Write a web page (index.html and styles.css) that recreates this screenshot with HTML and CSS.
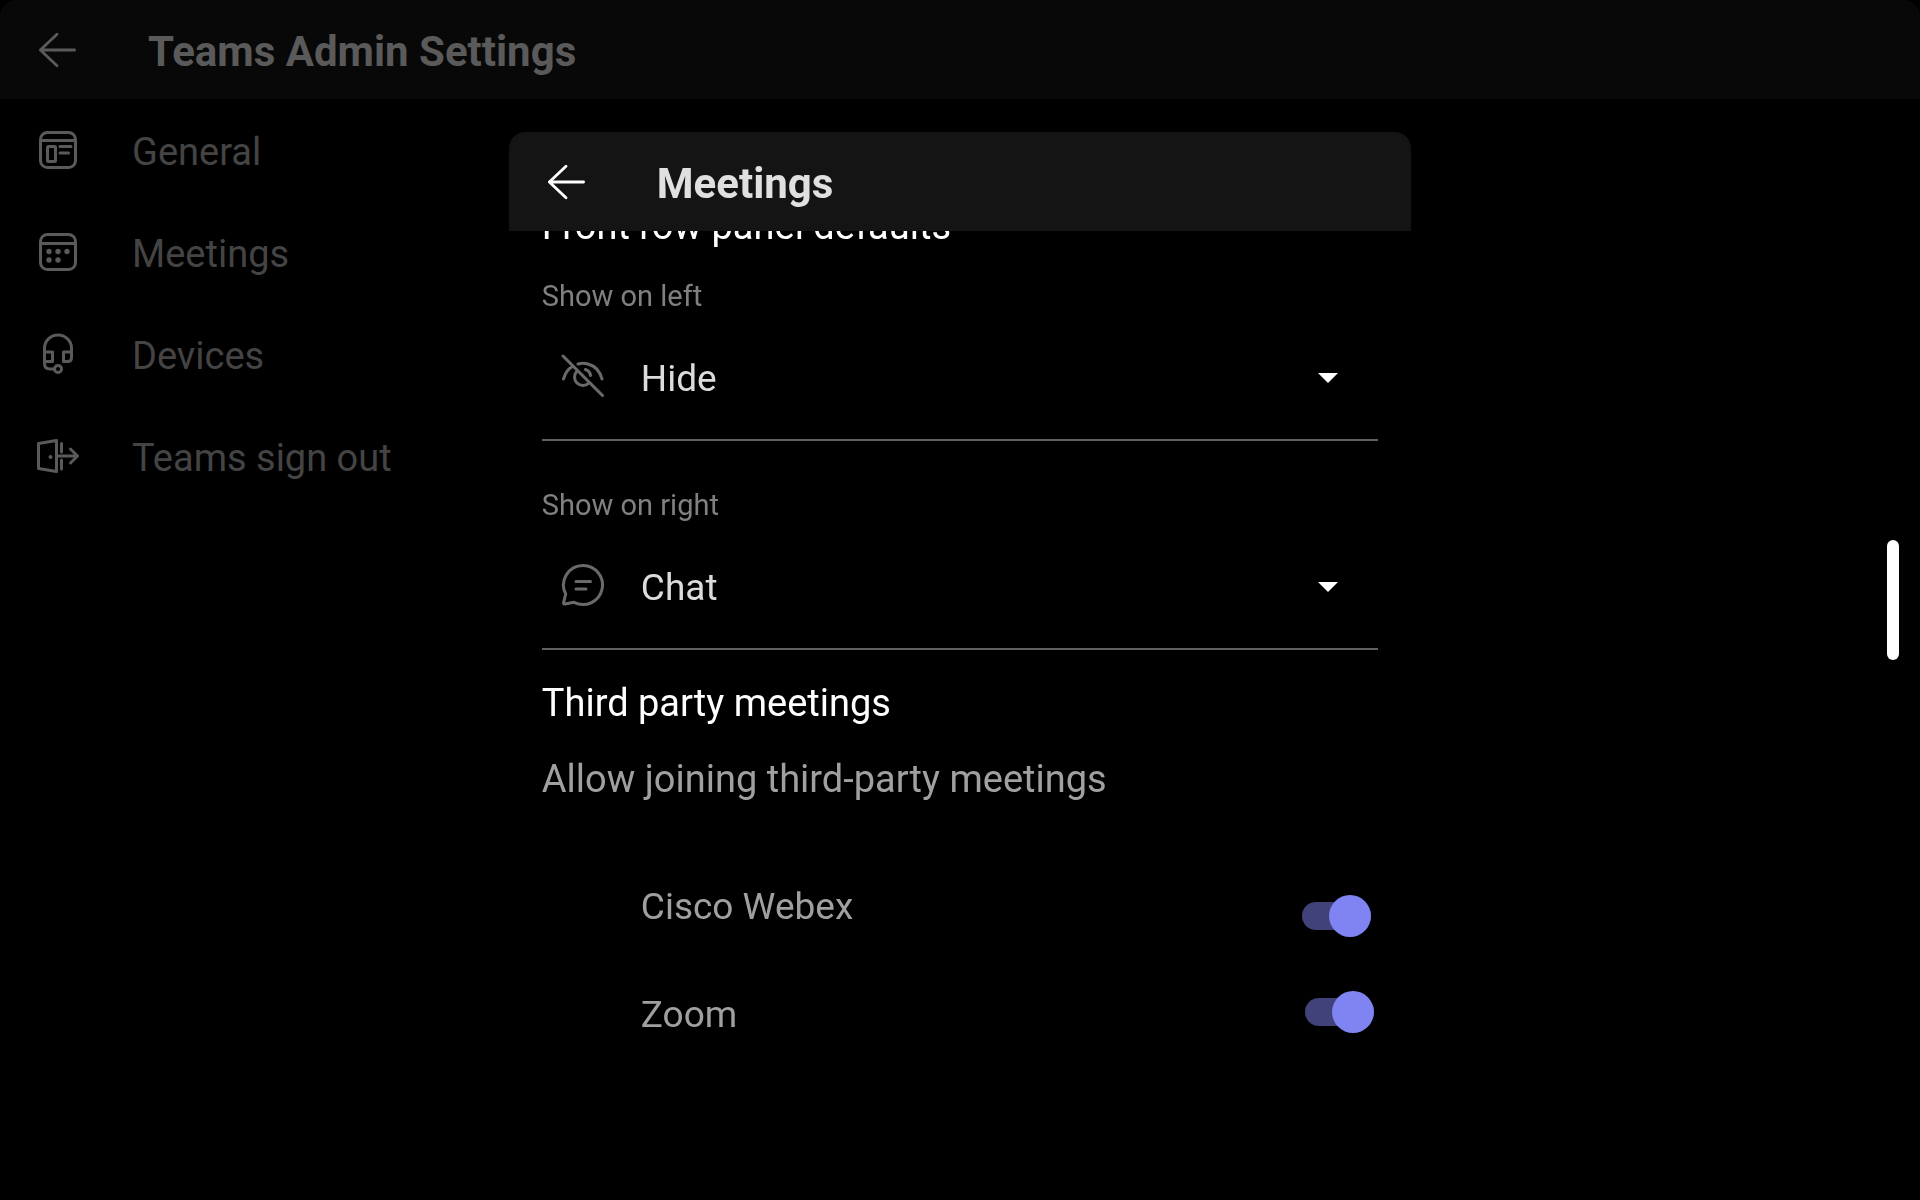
FILE: index.html
```html
<!DOCTYPE html>
<html lang="en">
<head>
<meta charset="utf-8">
<title>Teams Admin Settings</title>
<link rel="stylesheet" href="styles.css">
</head>
<body>
<div class="app">
  <header class="bar app-bar">
    <button class="icon-button" type="button" aria-label="Back">
      <svg class="arrow" viewBox="0 0 40 40"><path d="M20 3.500L2.500 20L20 36.500M2.500 20H38.500"/></svg>
    </button>
    <h1 class="bar-title">Teams Admin Settings</h1>
  </header>
  <nav class="menu">
    <a class="menu-item" href="#general">
      <svg class="menu-icon" viewBox="0 0 44 44"><rect x="4.500" y="4.500" width="35" height="35" rx="7"/><path d="M4.500 12.500H39.500M24 18.500H35M24 25H32.500"/><rect x="11.500" y="18.500" width="8" height="15" rx="1"/></svg>
      <span class="menu-text">General</span>
    </a>
    <a class="menu-item" href="#meetings">
      <svg class="menu-icon" viewBox="0 0 44 44"><rect x="4.500" y="4.500" width="35" height="35" rx="7"/><path d="M4.500 13.500H39.500"/><g class="dots"><circle cx="13" cy="21.500" r="2.700"/><circle cx="22" cy="21.500" r="2.700"/><circle cx="31" cy="21.500" r="2.700"/><circle cx="13" cy="30" r="2.700"/><circle cx="22" cy="30" r="2.700"/></g></svg>
      <span class="menu-text">Meetings</span>
    </a>
    <a class="menu-item" href="#devices">
      <svg class="menu-icon" viewBox="0 0 44 44"><path d="M8.500 30V16A13.500 13 0 0 1 35.500 16V25.500Q35.500 29.500 31.500 29.500H27.500V20H35.500M8.500 20H16.500V29.500H8.500V31.500Q8.500 37 14 37H18"/><circle cx="22" cy="37" r="3.500"/></svg>
      <span class="menu-text">Devices</span>
    </a>
    <a class="menu-item" href="#sign-out">
      <svg class="menu-icon" viewBox="0 0 44 44"><path d="M2.500 9.500L20.500 6.500V37.500L2.500 34.500ZM21 22H41M34.500 15L41.500 22L34.500 29M25.500 9.500V18M25.500 26V35"/><circle class="dots" cx="14.500" cy="23" r="2"/></svg>
      <span class="menu-text">Teams sign out</span>
    </a>
  </nav>
</div>

<div class="overlay">
  <section class="dialog" role="dialog" aria-labelledby="dialog-title">
    <header class="bar dialog-bar">
      <button class="icon-button" type="button" aria-label="Back">
        <svg class="arrow" viewBox="0 0 40 40"><path d="M20 3.500L2.500 20L20 36.500M2.500 20H38.500"/></svg>
      </button>
      <h2 class="bar-title" id="dialog-title">Meetings</h2>
    </header>
    <div class="viewport">
      <div class="scrolled">
        <h3 class="section-title">Front row panel defaults</h3>
        <div class="field">
          <label class="field-label" for="left">Show on left</label>
          <div class="picker">
            <svg class="picker-icon" viewBox="0 0 48 48"><path d="M4 4L43.500 43.500M4.500 27Q7 18 13.500 14.500M19 12Q24 10.500 29 12Q40 15 43 27M18 19A8 8 0 1 0 30 31M26.500 17.500Q31 19 31.500 23.500"/></svg>
            <select class="picker-select" id="left"><option>Hide</option><option>Chat</option></select>
            <svg class="caret" viewBox="0 0 20 12"><path d="M0 1H20L10 11Z"/></svg>
          </div>
        </div>
        <div class="field">
          <label class="field-label" for="right">Show on right</label>
          <div class="picker">
            <svg class="picker-icon" viewBox="0 0 48 48"><path d="M24 4.500A19.500 19.500 0 1 1 15 41.300L6 43Q4.200 43.300 4.600 41.500L6.700 33A19.500 19.500 0 0 1 24 4.500ZM17 20.500H31.500M17 28H27"/></svg>
            <select class="picker-select" id="right"><option>Chat</option><option>Hide</option></select>
            <svg class="caret" viewBox="0 0 20 12"><path d="M0 1H20L10 11Z"/></svg>
          </div>
        </div>
        <h3 class="section-title third-party">Third party meetings</h3>
        <p class="hint">Allow joining third-party meetings</p>
        <div class="toggles">
          <div class="toggle-row toggle-low">
            <label for="webex">Cisco Webex</label>
            <input class="switch" type="checkbox" role="switch" id="webex" checked>
          </div>
          <div class="toggle-row">
            <label for="zoom">Zoom</label>
            <input class="switch" type="checkbox" role="switch" id="zoom" checked>
          </div>
        </div>
      </div>
    </div>
  </section>
</div>
<div class="scroll-thumb"></div>
</body>
</html>
```
FILE: styles.css
```css
* {
  box-sizing: border-box;
}

body {
  margin: 0;
  min-height: 100vh;
  background: #000;
  color: #a0a0a0;
  font: 38px/48px Roboto, sans-serif;
}

h1, h2, h3, p {
  margin: 0;
}

svg {
  flex: none;
  fill: none;
  stroke: currentColor;
  stroke-linecap: round;
  stroke-linejoin: round;
}

.bar {
  display: flex;
  align-items: center;
  gap: 72px;
  height: 99px;
  padding: 0 38px;
}

.app-bar {
  background: #080808;
  border-radius: 16px 16px 0 0;
  color: #5a5a5a;
}

.dialog-bar {
  background: #141414;
  border-radius: 16px 16px 0 0;
  color: #e0e0e0;
}

.bar-title {
  padding-top: 4px;
  font-size: 42px;
  line-height: 48px;
  font-weight: 700;
}

.icon-button {
  display: flex;
  padding: 0;
  border: 0;
  background: none;
  color: inherit;
}

.dialog-bar .icon-button {
  color: #fff;
}

.arrow {
  width: 38px;
  height: 38px;
  stroke-width: 3;
}

.menu {
  display: flex;
  flex-direction: column;
}

.menu-item {
  display: flex;
  align-items: center;
  gap: 52px;
  height: 102px;
  padding-left: 36px;
  color: #444;
  text-decoration: none;
}

.menu-text {
  padding-top: 4px;
}

.menu-icon {
  width: 44px;
  height: 44px;
  color: #5a5a5a;
  stroke-width: 3;
}

.dots {
  fill: currentColor;
  stroke: none;
}

.overlay {
  position: fixed;
  inset: 0;
  display: grid;
  place-items: center;
}

.dialog {
  display: flex;
  flex-direction: column;
  width: 47%;
  height: 78%;
  background: #000;
  border-radius: 16px;
}

.viewport {
  flex: 1;
  overflow: hidden;
}

.scrolled {
  display: flex;
  flex-direction: column;
  margin-top: -29px;
  padding: 0 33px;
}

.section-title {
  color: #fff;
  font-size: 38px;
  font-weight: 400;
}

.field {
  display: flex;
  flex-direction: column;
  margin-top: 28px;
}

.field + .field {
  margin-top: 46px;
}

.field-label {
  color: #808080;
  font-size: 29px;
  line-height: 36px;
}

.picker {
  display: flex;
  align-items: center;
  height: 127px;
  padding: 0 40px 0 17px;
  border-bottom: 2px solid #606060;
}

.picker-icon {
  width: 48px;
  height: 48px;
  margin-bottom: 2px;
  color: #6a6a6a;
  stroke-width: 3;
}

.picker-select {
  flex: 1;
  height: 52px;
  margin-left: 34px;
  padding: 4px 0 0;
  border: 0;
  appearance: none;
  background: none;
  color: #dcdcdc;
  font: inherit;
  font-size: 37px;
}

.caret {
  width: 20px;
  height: 12px;
  margin-top: 2px;
  fill: #fff;
  stroke: none;
}

.third-party {
  margin-top: 29px;
}

.hint {
  margin-top: 28px;
}

.toggles {
  display: flex;
  flex-direction: column;
  gap: 54px;
  margin-top: 80px;
  padding: 0 4px 0 99px;
  font-size: 37px;
}

.toggle-row {
  display: flex;
  align-items: flex-start;
  justify-content: space-between;
}

.toggle-low {
  height: 54px;
  padding-right: 3px;
}

.toggle-low .switch {
  align-self: flex-end;
}

.switch {
  position: relative;
  width: 69px;
  height: 42px;
  margin: 0;
  appearance: none;
}

.switch::before {
  content: "";
  position: absolute;
  inset: 7px 0;
  border-radius: 14px;
  background: #42427a;
}

.switch::after {
  content: "";
  position: absolute;
  top: 0;
  left: 0;
  width: 42px;
  height: 42px;
  border-radius: 50%;
  background: #8083f2;
}

.switch:checked::after {
  left: auto;
  right: 0;
}

.scroll-thumb {
  position: fixed;
  top: 45%;
  right: 21px;
  width: 12px;
  height: 120px;
  border-radius: 6px;
  background: #fff;
}
```
